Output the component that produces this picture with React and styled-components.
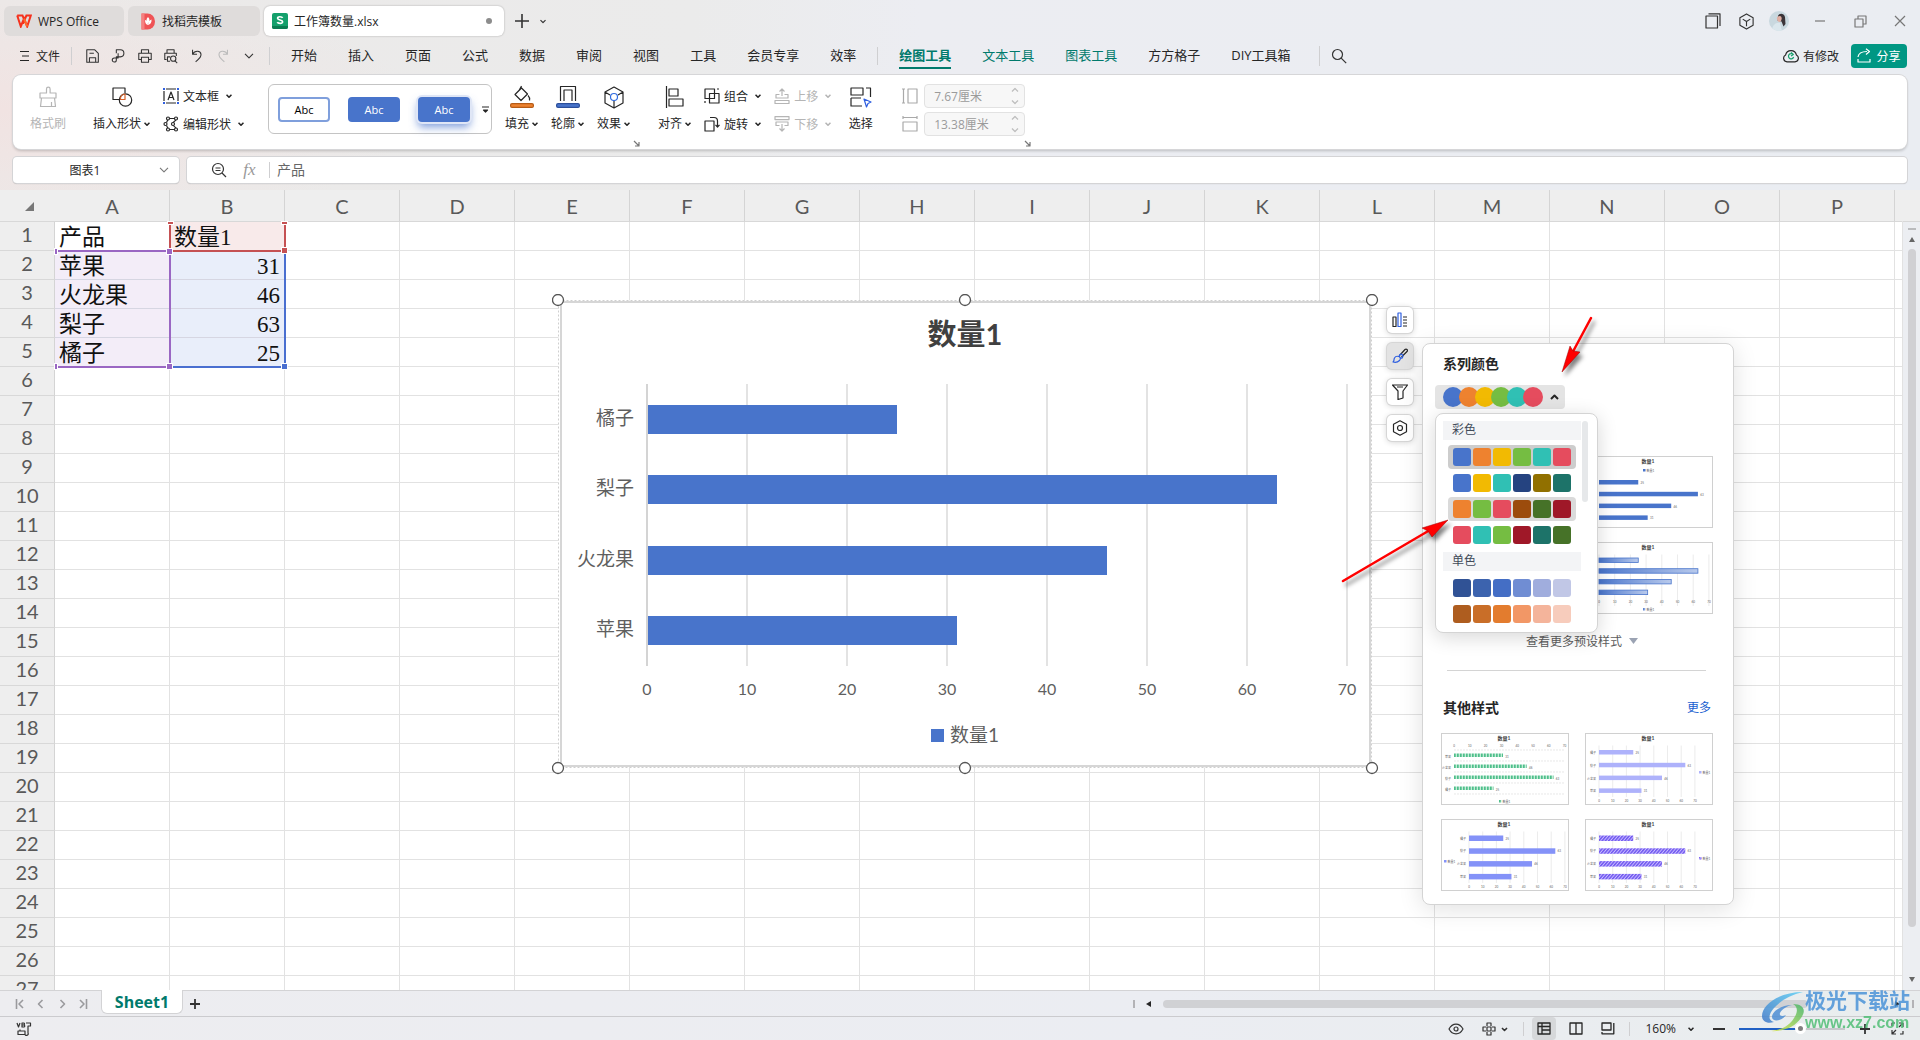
import styled, { createGlobalStyle, css } from 'styled-components';

const GlobalStyle = createGlobalStyle`
  * {
    box-sizing: border-box;
  }

  body {
    margin: 0;
    font-family: 'Open Sans', 'Noto Sans CJK SC', sans-serif;
    font-size: 12px;
    color: #262626;
  }

  button, input {
    font: inherit;
    color: inherit;
    margin: 0;
    padding: 0;
    border: 0;
    background: none;
  }
`;

const Page = styled.div`
  position: relative;
  display: flex;
  flex-direction: column;
  height: 100vh;
  overflow: hidden;
  background:
    radial-gradient(ellipse 420px 130px at 0 110px, #f1e3e2, rgba(241, 227, 226, 0)),
    linear-gradient(90deg, #ebe9e8 0, #ebebeb 36%, #ecedf2 48%, #eaedf2 100%);
`;

/* ---------- title bar ---------- */

const TitleBar = styled.header`
  display: flex;
  align-items: center;
  gap: 4px;
  height: 36px;
  padding: 6px 10px 0 4px;
`;

const DocTab = styled.button`
  display: flex;
  align-items: center;
  gap: 6px;
  width: ${(p) => p.$width}px;
  height: 30px;
  padding: 0 12px 0 ${(p) => (p.$active ? 8 : 12)}px;
  border-radius: 6px;
  background: ${(p) => (p.$active ? '#fff' : '#dfdcdb')};
  box-shadow: ${(p) => (p.$active ? '0 0 2px rgba(0, 0, 0, 0.3)' : 'none')};
`;

const Dot = styled.span`
  width: 6px;
  height: 6px;
  margin-left: auto;
  border-radius: 50%;
  background: #8c8c8c;
`;

const IconButton = styled.button`
  display: flex;
  align-items: center;
  justify-content: center;
  width: ${(p) => p.$width || 20}px;
  height: ${(p) => p.$height || 24}px;
  flex: none;
  color: ${(p) => p.$color || '#333'};
`;

const WindowButtons = styled.div`
  display: flex;
  align-items: center;
  gap: 13px;
  margin-left: auto;
`;

const WindowControls = styled.div`
  display: flex;
  gap: 20px;
  margin-left: 8px;
`;

/* ---------- menu ---------- */

const MenuRow = styled.nav`
  display: flex;
  align-items: center;
  height: 39px;
  padding: 0 13px 0 19px;
`;

const FileButton = styled.button`
  display: flex;
  align-items: center;
  gap: 6px;
  height: 24px;
`;

const Rule = styled.span`
  flex: none;
  width: 1px;
  height: ${(p) => p.$height || 18}px;
  margin: 0 ${(p) => p.$end || p.$gap}px 0 ${(p) => p.$gap}px;
  background: #cfcfd1;
`;

const QuickTools = styled.div`
  display: flex;
  gap: 6px;
`;

const MenuItems = styled.div`
  display: flex;
  gap: 31px;
  font-size: 13px;
`;

const MenuItem = styled.button`
  height: 26px;
  line-height: 22px;
  white-space: nowrap;
  color: ${(p) => (p.$tool ? '#007a6c' : '#262626')};
  border-bottom: 2px solid ${(p) => (p.$active ? '#007a6c' : 'transparent')};
  font-weight: ${(p) => (p.$active ? 700 : 400)};
`;

const MenuEnd = styled.div`
  display: flex;
  align-items: center;
  gap: 12px;
  margin-left: auto;
`;

const Unsaved = styled.button`
  display: flex;
  align-items: center;
  gap: 4px;
`;

const ShareButton = styled.button`
  display: flex;
  align-items: center;
  justify-content: center;
  gap: 5px;
  width: 56px;
  height: 24px;
  border-radius: 4px;
  background: #009783;
  color: #fff;
`;

/* ---------- ribbon ---------- */

const Ribbon = styled.section`
  display: flex;
  flex: none;
  height: 74px;
  margin: 0 13px;
  border-radius: 8px;
  background: #fff;
  box-shadow: 0 0 0 1px #d6d6d8, 0 2px 3px rgba(0, 0, 0, 0.2);
`;

const Group = styled.div`
  position: relative;
  display: flex;
  align-items: flex-start;
  gap: 13px;
  padding: 9px ${(p) => p.$end || 13}px 0 ${(p) => p.$start || 13}px;

  & + &::before {
    content: '';
    position: absolute;
    left: 0;
    top: 4px;
    bottom: 4px;
    width: 1px;
    background: #d5d5d5;
  }
`;

const BigButton = styled.button`
  display: flex;
  flex-direction: column;
  align-items: center;
  min-width: 33px;
  color: ${(p) => (p.disabled ? '#b5b5b5' : '#262626')};
`;

const BigIcon = styled.span`
  display: flex;
  align-items: center;
  height: 26px;
  margin-bottom: 5px;
`;

const Label = styled.span`
  display: flex;
  align-items: center;
  gap: 3px;
  line-height: 18px;
  white-space: nowrap;
`;

const Stack = styled.div`
  display: flex;
  flex-direction: column;
  gap: 4px;
`;

const SmallButton = styled.button`
  display: flex;
  align-items: center;
  gap: 4px;
  height: 24px;
  white-space: nowrap;
  color: ${(p) => (p.disabled ? '#b5b5b5' : '#262626')};

  svg:last-child {
    margin-left: 3px;
  }
`;

const Gallery = styled.div`
  display: flex;
  align-items: center;
  gap: 18px;
  width: 224px;
  height: 50px;
  padding: 0 0 0 9px;
  border: 1px solid #c4c4c4;
  border-radius: 6px;
`;

const GalleryMore = styled.button`
  display: flex;
  flex: none;
  margin-left: -6px;
`;

const Preset = styled.button`
  width: 52px;
  height: 25px;
  flex: none;
  border-radius: 4px;
  font-size: 11px;
  ${(p) =>
    p.$outline
      ? css`
          border: 2px solid #7f9fdc;
          color: #000;
        `
      : css`
          background: #4874cb;
          color: #fff;
        `}
  box-shadow: ${(p) => (p.$raised ? '0 0 0 2px #dfe6f6, 0 5px 8px rgba(72, 116, 203, 0.7)' : 'none')};
`;

const Launcher = styled.button`
  position: absolute;
  right: ${(p) => p.$right || 2}px;
  bottom: 2px;
  display: flex;
`;

const SizeRow = styled.label`
  display: flex;
  align-items: center;
  gap: 6px;
  color: #a9a9a9;
`;

const SizeBox = styled.span`
  display: flex;
  align-items: center;
  width: 101px;
  height: 24px;
  padding: 0 5px 0 9px;
  border: 1px solid #e2e2e2;
  border-radius: 4px;
  background: #f7f7f7;
`;

const SizeInput = styled.input`
  flex: 1;
  min-width: 0;
  color: #9b9b9b;
`;

/* ---------- formula bar ---------- */

const FormulaRow = styled.div`
  display: flex;
  flex: none;
  gap: 8px;
  margin: 8px 13px 7px;
`;

const FormulaBox = styled.div`
  display: flex;
  align-items: center;
  height: 26px;
  padding: 0 4px 0 ${(p) => (p.$grow ? 22 : 4)}px;
  border-radius: 4px;
  background: #fff;
  box-shadow: 0 0 0 1px #d4d4d6, 0 1px 1px rgba(0, 0, 0, 0.25);
  flex: ${(p) => (p.$grow ? 1 : 'none')};
`;

const NameInput = styled.input`
  width: 136px;
  text-align: center;
`;

const FormulaInput = styled.input`
  flex: 1;
  padding-bottom: 2px;
  font-size: 14px;
  color: #666;
`;

const Fx = styled.button`
  width: 35px;
  padding-left: 6px;
  font-family: 'Liberation Serif', serif;
  font-style: italic;
  font-size: 17px;
  color: #999;
`;

/* ---------- sheet ---------- */

const SheetArea = styled.main`
  display: flex;
  flex: 1;
  min-height: 0;
  background: #eee;
`;

const SheetView = styled.div`
  position: relative;
  flex: 1;
  min-width: 0;
  overflow: hidden;
`;

const Table = styled.table`
  width: 100%;
  table-layout: fixed;
  border-collapse: separate;
  border-spacing: 0;
`;

const CornerCell = styled.th`
  width: 55px;
  height: 32px;
  padding: 2px 0 0 3px;
  background: #eee;
  border-bottom: 1px solid #d8d8d8;
  color: #777;
`;

const ColHead = styled.th`
  width: ${(p) => (p.$last ? 'auto' : '115px')};
  padding: 1px 0 0;
  background: #eee;
  border-right: 1px solid ${(p) => (p.$last ? '#eee' : '#d4d4d4')};
  border-bottom: 1px solid #d8d8d8;
  font: 400 20px/30px Lato, sans-serif;
  color: #595959;
`;

const RowHead = styled.th`
  height: 29px;
  padding: 0 0 4px;
  background: #eee;
  border-right: 1px solid #d4d4d4;
  border-bottom: 1px solid #d8d8d8;
  font: 400 20px/24px Lato, sans-serif;
  color: #595959;
`;

const fills = { red: '#f8eaea', purple: '#f3edf8', blue: '#e9eefa' };
const lines = { red: '#c55153', purple: '#9a67c3', blue: '#4a6fd0' };

const Cell = styled.td`
  padding: 4px 4px 0;
  background: ${(p) => fills[p.$fill] || '#fff'};
  border-right: 1px solid #e2e2e2;
  border-bottom: 1px solid ${(p) => (p.$fill ? '#d6d6e2' : '#e2e2e2')};
  font: 400 23px/24px 'Liberation Serif', 'Noto Sans CJK SC', serif;
  text-align: ${(p) => (p.$fill === 'blue' ? 'right' : 'left')};
  white-space: nowrap;
  color: #111;
`;

const RangeBox = styled.div`
  position: absolute;
  left: ${(p) => 54 + p.$col * 115}px;
  top: ${(p) => 31 + p.$row * 29}px;
  width: 117px;
  height: ${(p) => p.$rows * 29 + 2}px;
  border: 2px solid ${(p) => lines[p.$tone]};
  border-top-width: ${(p) => (p.$tone === 'purple' ? 2 : 0)}px;
  border-left-width: ${(p) => (p.$tone === 'red' ? 2 : 0)}px;
`;

const RangeHandle = styled.i`
  position: absolute;
  width: ${(p) => (p.$half ? 4 : 7)}px;
  height: ${(p) => (p.$cut ? 4 : 7)}px;
  border: 1px solid #fff;
  background: ${(p) => lines[p.$tone]};
  ${(p) => (p.$right ? 'right: -4px;' : `left: ${p.$half ? 0 : -4}px;`)}
  ${(p) => (p.$bottom ? 'bottom: -4px;' : `top: ${p.$cut ? 0 : -4}px;`)}
`;

const ScrollStrip = styled.div`
  display: flex;
  flex-direction: column;
  align-items: center;
  width: 17px;
  margin-top: 31px;
  padding: 6px 0 8px;
  gap: 7px;
  border-top: 1px solid #d8d8d8;
  background: #eceef2;
  color: #666;
`;

const ScrollThumb = styled.span`
  flex: 1;
  width: 8px;
  margin-bottom: 43px;
  border-radius: 4px;
  background: #d0d0d3;
`;

/* ---------- floating chart ---------- */

const ChartObject = styled.figure`
  position: absolute;
  left: 552px;
  top: 104px;
  margin: 0;

  svg {
    display: block;
  }
`;

const ChartButtons = styled.div`
  position: absolute;
  left: 1387px;
  top: 117px;
  display: flex;
  flex-direction: column;
  gap: 10px;
`;

const ChartButton = styled.button`
  display: flex;
  align-items: center;
  justify-content: center;
  width: 26px;
  height: 26px;
  border-radius: 5px;
  background: ${(p) => (p.$active ? '#e3e3e3' : '#fff')};
  box-shadow: 0 0 0 1px #d6d6d6, 0 1px 6px rgba(0, 0, 0, 0.2);
`;

/* ---------- style panel ---------- */

const Panel = styled.aside`
  position: absolute;
  left: 1422px;
  top: 153px;
  width: 312px;
  padding: 10px 12px 13px;
  border: 1px solid #d4d4d4;
  border-radius: 8px;
  background: #fff;
  box-shadow: 0 4px 24px rgba(0, 0, 0, 0.12);
`;

const PanelHead = styled.div`
  display: flex;
  justify-content: space-between;
  align-items: center;
  padding: 0 10px 0 8px;
  line-height: 20px;

  a {
    color: #1a5fd0;
    text-decoration: none;
  }
`;

const PanelTitle = styled.h3`
  margin: 0;
  font-size: 14px;
  font-weight: 700;
  line-height: 20px;
`;

const ColorSelect = styled.div`
  position: relative;
  margin: 11px 0 47px;
`;

const ColorButton = styled.button`
  display: flex;
  align-items: center;
  width: 130px;
  height: 24px;
  padding-left: 8px;
  border-radius: 4px;
  background: #e4e4e4;

  svg {
    margin-left: auto;
    margin-right: 6px;
  }
`;

const ColorDot = styled.span`
  width: 20px;
  height: 20px;
  margin-right: -4px;
  border-radius: 50%;
  background: ${(p) => p.$color};
`;

const Dropdown = styled.div`
  position: absolute;
  z-index: 1;
  left: 0;
  top: 28px;
  display: flex;
  gap: 1px;
  width: 163px;
  padding: 7px 3px 4px 7px;
  border: 1px solid #d4d4d4;
  border-radius: 8px;
  background: #fff;
  box-shadow: 0 4px 20px rgba(0, 0, 0, 0.16);
`;

const DropdownBody = styled.div`
  width: 138px;
`;

const DropdownBar = styled.span`
  width: 6px;
  height: 81px;
  border-radius: 3px;
  background: #e6e8ea;
`;

const ColorGroup = styled.div`
  height: 19px;
  margin-bottom: 5px;
  padding-left: 9px;
  background: #f3f4f6;
  line-height: 18px;
  color: #414b59;

  button + & {
    margin-top: 5px;
  }
`;

const SwatchRow = styled.button`
  display: flex;
  align-items: center;
  gap: 2px;
  height: 24px;
  margin: 0 0 2px 5px;
  padding: 0 5px;
  border-radius: 4px;
  background: ${(p) => p.$bg || 'transparent'};
`;

const Swatch = styled.span`
  width: 18px;
  height: 18px;
  border-radius: 3px;
  background: ${(p) => p.$color};
`;

const ThumbGrid = styled.div`
  display: grid;
  grid-template-columns: 128px 128px;
  gap: 14px 16px;
  padding-left: 6px;
`;

const Thumb = styled.button`
  height: 72px;
  border: 1px solid #d0d0d0;
  background: #fff;

  svg {
    display: block;
  }
`;

const MoreButton = styled.button`
  display: flex;
  align-items: center;
  gap: 7px;
  height: 20px;
  margin: 17px auto 0 91px;
  color: #5c5c5c;
`;

const PanelRule = styled.hr`
  height: 1px;
  margin: 19px 15px 27px 12px;
  border: 0;
  background: #d4d4d4;
`;

const Spacer = styled.div`
  height: 15px;
`;

/* ---------- footer ---------- */

const Footer = styled.footer`
  position: relative;
  flex: none;
  background: linear-gradient(90deg, #ededf0, #ebedf2 60%, #e9edee);
`;

const SheetBar = styled.div`
  display: flex;
  align-items: center;
  height: 27px;
  padding-left: 10px;
  padding-right: 6px;
  border-top: 1px solid #d3d3d5;
  border-bottom: 1px solid #cbcbce;
`;

const SheetNav = styled.div`
  display: flex;
  gap: 1px;
  margin-right: 8px;
`;

const SheetTab = styled.button`
  align-self: flex-start;
  width: 82px;
  height: 24px;
  margin-top: -1px;
  border: 1px solid #d3d3d5;
  border-top: 0;
  border-radius: 0 0 6px 6px;
  background: #fff;
  color: #007a6c;
  font-size: 16px;
  font-weight: 700;
  line-height: 22px;
`;

const HScroll = styled.div`
  display: flex;
  align-items: center;
  gap: 11px;
  width: 41%;
  margin-left: auto;
`;

const HThumb = styled.span`
  flex: 1;
  height: 8px;
  margin-right: 76px;
  border-radius: 4px;
  background: #d0d1d4;
`;

const Grip = styled.span`
  width: 2px;
  height: 8px;
  background: #b3b3b6;
`;

const StatusBar = styled.div`
  display: flex;
  align-items: center;
  height: 23px;
  padding: 0 15px 0 14px;
`;

const StatusEnd = styled.div`
  display: flex;
  align-items: center;
  margin-left: auto;
`;

const ReadTools = styled.div`
  display: flex;
  gap: 18px;
`;

const ViewButton = styled.button`
  display: flex;
  align-items: center;
  justify-content: center;
  width: 24px;
  height: 23px;
  margin-right: 8px;
  border-radius: 4px;
  background: ${(p) => (p.$active ? '#d6d8da' : 'transparent')};
`;

const ZoomText = styled.button`
  display: flex;
  align-items: center;
  gap: 12px;
  margin-right: 17px;
`;

const ZoomSlider = styled.input`
  appearance: none;
  width: 106px;
  height: 2px;
  margin: 0 12px;
  background: linear-gradient(90deg, #2060c4 58%, #c6c8cb 58%);

  &::-webkit-slider-thumb {
    appearance: none;
    width: 11px;
    height: 11px;
    border: 3px solid #fff;
    border-radius: 50%;
    background: #808080;
  }
`;

const FullScreen = styled(IconButton)`
  margin-left: 16px;
`;

const Watermark = styled.div`
  position: absolute;
  right: 10px;
  bottom: 6px;
  display: flex;
  align-items: center;
  gap: 1px;
  opacity: 0.85;
  pointer-events: none;
`;

const WatermarkText = styled.div`
  display: flex;
  flex-direction: column;
  font-family: 'Liberation Sans', 'Noto Sans CJK SC', sans-serif;

  strong {
    font-size: 21px;
    line-height: 23px;
    color: #4b93d8;
  }

  span {
    font-size: 16px;
    line-height: 22px;
    font-weight: 700;
    color: #52bf77;
  }
`;

const Arrows = styled.svg`
  position: absolute;
  z-index: 2;
  left: 1330px;
  top: 300px;
  pointer-events: none;
  filter: drop-shadow(3px 4px 2px rgba(0, 0, 0, 0.5));
`;

/* ---------- icons ---------- */

const Svg = ({ w = 18, h = w, vb, children, stroke = 'currentColor', sw = 1.2 }) => (
  <svg
    width={w}
    height={h}
    viewBox={vb || `0 0 ${w} ${h}`}
    fill="none"
    stroke={stroke}
    strokeWidth={sw}
    strokeLinejoin="round"
    aria-hidden="true"
  >
    {children}
  </svg>
);

const Chevron = ({ w = 6, sw = 1.6 }) => (
  <Svg w={w} h={w} vb="0 0 6 6" sw={sw}>
    <path d="M.5 1.7 3 4.2 5.5 1.7" />
  </Svg>
);

const WideChevron = () => (
  <Svg w={10} h={6} sw={1.1}>
    <path d="M1 .8 5 4.8 9 .8" />
  </Svg>
);

const Triangle = ({ d, w = 7, h = 6 }) => (
  <Svg w={w} h={h} stroke="none">
    <path d={d} fill="currentColor" />
  </Svg>
);

const WpsLogo = () => (
  <svg width="16" height="14" viewBox="0 0 16 14" fill="none" aria-hidden="true">
    <path d="M1.2 1.5h5.3L8 5.3M1.2 1.5l3.6 11L8 4.7l3.2 7.8 3.6-11h-4.4L7 9.5" stroke="#f5311d" strokeWidth="2" />
    <path d="M8 4.7l3.2 7.8" stroke="#ff6a2b" strokeWidth="2" />
  </svg>
);

const DocerLogo = () => (
  <svg width="16" height="17" viewBox="0 0 15 17" aria-hidden="true">
    <path d="M1 .5h6a7.500 8 0 0 1 0 16H1z" fill="#ef5355" />
    <path d="M1 .5h3v16H1z" fill="#f58080" />
    <path d="M7.500 4c2 2 2 4 0 6-2-2-2-4 0-6zM4.500 7c2 .5 3 2 3 5-2-.6-3-2-3-5zM11 6.500c.3 3-1 5-3.500 5.500 0-3 1.500-4.500 3.500-5.500z" fill="#fff" />
  </svg>
);

const SheetLogo = () => (
  <svg width="16" height="16" viewBox="0 0 16 16" aria-hidden="true">
    <rect width="16" height="16" rx="2" fill="#14a06c" />
    <path d="M0 13h16v1a2 2 0 0 1-2 2H2a2 2 0 0 1-2-2z" fill="#0b7c52" />
    <path d="M10.600 4.800C10 3.600 5.700 3 5.600 5.300c0 2.200 5 1.200 5 3.500C10.500 11.200 6 10.700 5.300 9.200" fill="none" stroke="#fff" strokeWidth="1.700" />
  </svg>
);

const Avatar = () => (
  <svg width="20" height="20" viewBox="0 0 20 20" aria-hidden="true">
    <clipPath id="face">
      <circle cx="10" cy="10" r="10" />
    </clipPath>
    <g clipPath="url(#face)">
      <rect width="20" height="20" fill="#c9d8df" />
      <path d="M9 5c1-3 6-3 7 1l.5 7-2 2.500-2-5-4-1z" fill="#3b3438" />
      <path d="M8 6.500c1.500-2 4-2 4.500 0s-.5 4-2 4.500S7.500 8.500 8 6.500z" fill="#e0b0a4" />
      <path d="M3 20c0-6 4-9 8-8l2 8z" fill="#dbe7ed" />
    </g>
  </svg>
);

const quickIcons = [
  ['保存', <path key="a" d="M2 2h9l4 4v10H2zM5 16v-5h7v5M5 6h5" />],
  ['输出', <path key="a" d="M6 6V2h4.500a4 4 0 0 1 0 8H6v3.500a2.300 2.300 0 1 1-2.300-2.300H8V6" />],
  ['打印', <path key="a" d="M5 6V2h8v4M4.500 13H2V6h14v7h-2.500M5 10.500h8V16H5z" />],
  ['预览', <g key="a"><path d="M4.500 6V2h8v4M4 13H2V6h13v3M8 15H5v-5h3" /><circle cx="11.500" cy="12" r="3" /><path d="m13.500 14.500 2.500 2.500" /></g>],
  ['撤销', <path key="a" d="M4 2v5h5M4.300 6.700C6 3 13 2 13.500 7c.3 4-3.500 6-6 8.500" />],
];

const Cube = ({ w = 18 }) => (
  <Svg w={w} vb="0 0 18 18">
    <path d="M9 1 16 5v8l-7 4-7-4V5zM5 6.500 9 9l4-2.500M9 9v5" />
  </Svg>
);

/* ---------- data ---------- */

const columns = 'ABCDEFGHIJKLMNOP'.split('');
const rows = [
  ['产品', '数量1'],
  ['苹果', 31],
  ['火龙果', 46],
  ['梨子', 63],
  ['橘子', 25],
];
const series = rows.slice(1).map(([name, value]) => ({ name, value })).reverse();

const menus = ['开始', '插入', '页面', '公式', '数据', '审阅', '视图', '工具', '会员专享', '效率'];
const toolMenus = ['绘图工具', '文本工具', '图表工具'];
const extraMenus = ['方方格子', 'DIY工具箱'];

const mainColors = ['#4874cb', '#ee822f', '#f2ba02', '#75bd42', '#30c0b4', '#e54c5e'];
const colorful = [
  mainColors,
  ['#4874cb', '#f2ba02', '#30c0b4', '#254380', '#917000', '#1d7369'],
  ['#ee822f', '#75bd42', '#e54c5e', '#9c4c0c', '#467228', '#9f1828'],
  ['#e54c5e', '#30c0b4', '#75bd42', '#9f1828', '#1d7369', '#467228'],
];
const single = [
  ['#305295', '#3c63ae', '#446ec5', '#708dd3', '#a0addd', '#c1c7e6'],
  ['#ae5d1f', '#c96e28', '#e37c2e', '#f29766', '#f4b49b', '#f7ccbc'],
];

const cellFill = (r, c) => {
  if (r === 0) return c === 1 ? 'red' : undefined;
  if (r > 4) return undefined;
  return ['purple', 'blue'][c];
};

/* ---------- charts ---------- */

const ChartText = styled.text`
  font-family: Lato, 'Noto Sans CJK SC', sans-serif;
  font-size: ${(p) => p.$size}px;
  font-weight: ${(p) => (p.$bold ? 700 : 400)};
  fill: ${(p) => (p.$bold ? '#404040' : '#5f5f5f')};
  stroke: none;
  text-anchor: ${(p) => p.$anchor || 'middle'};
`;

function BarChart() {
  const ticks = [0, 10, 20, 30, 40, 50, 60, 70];
  return (
    <svg width="828" height="482" viewBox="0 0 828 482" role="img" aria-label="数量1">
      <rect x="6.500" y="6.500" width="813" height="467" fill="#fff" stroke="#cfcfcf" strokeDasharray="2 2" />
      <rect x="9" y="8" width="809" height="464" fill="#fff" stroke="#d6d6d6" strokeWidth="2" />
      <ChartText x="413" y="51" $size={29} $bold>数量1</ChartText>
      {ticks.map((t) => (
        <g key={t}>
          <rect x={94 + t * 10} y="90" width="2" height="282" fill={t ? '#e3e3e3' : '#d4d4d4'} />
          <ChartText x={95 + t * 10} y="401" $size={16}>{t}</ChartText>
        </g>
      ))}
      {series.map((s, i) => (
        <g key={s.name}>
          <rect x="96" y={111 + Math.round(i * 70.4)} width={s.value * 10 - 1} height="29" fill="#4874cb" />
          <ChartText x="82" y={131 + Math.round(i * 70.4)} $size={19} $anchor="end">{s.name}</ChartText>
        </g>
      ))}
      <rect x="379" y="435" width="13" height="13" fill="#4874cb" />
      <ChartText x="398" y="448" $size={19} $anchor="start">数量1</ChartText>
      {[6, 413, 820].map((x) =>
        [6, 474].map((y) => <circle key={`${x}-${y}`} cx={x} cy={y} r="5.500" fill="#fff" stroke="#555" strokeWidth="1.300" />)
      )}
    </svg>
  );
}

function MiniChart({ fill, left = 13, unit = 1.37, top = 15, step = 12.8, bar = 4.5, grid = true, axis = 66, axisTop, legend, flip, edge, names = true }) {
  const data = flip ? [...series].reverse() : series;
  const ticks = [0, 10, 20, 30, 40, 50, 60, 70];
  return (
    <svg width="126" height="70" viewBox="0 0 126 70" aria-hidden="true">
      <defs>
        <linearGradient id="fade">
          <stop offset="0" stopColor="#4874cb" />
          <stop offset="1" stopColor="#b9caec" />
        </linearGradient>
        <pattern id="dash" width="3" height="4" patternUnits="userSpaceOnUse">
          <rect width="3" height="4" fill="#c4ecd8" />
          <rect width="1.700" height="4" fill="#4fbf8b" />
        </pattern>
        <pattern id="hatch" width="2.500" height="2.500" patternUnits="userSpaceOnUse" patternTransform="rotate(40)">
          <rect width="2.500" height="2.500" fill="#c9bcff" />
          <rect width="1.500" height="2.500" fill="#6f57f0" />
        </pattern>
      </defs>
      <ChartText x="62" y="6" $size={5} $bold>数量1</ChartText>
      {grid && ticks.map((t) => <path key={t} d={`M${left + t * unit} 11.500V63`} stroke="#e4e4e4" strokeWidth=".7" />)}
      {axisTop && [16, 27, 38, 49, 60].map((y) => <path key={y} d={`M${left} ${y}H122`} stroke="#d8d8d8" strokeWidth=".6" strokeDasharray="2 1" />)}
      {axis > 0 && ticks.map((t) => <ChartText key={t} x={left + t * unit} y={axis + 2} $size={3}>{t}</ChartText>)}
      {data.map((s, i) => (
        <g key={s.name}>
          {names && <ChartText x={left - 3} y={top + i * step + 4} $size={3} $anchor="end">{s.name}</ChartText>}
          <rect x={left} y={top + i * step} width={s.value * unit} height={bar} fill={fill} stroke={edge} strokeWidth=".8" />
          {!edge && <ChartText x={left + s.value * unit + 4} y={top + i * step + 4} $size={3}>{s.value}</ChartText>}
        </g>
      ))}
      <rect x={legend[0]} y={legend[1]} width="2.500" height="2.500" fill={fill} />
      <ChartText x={legend[0] + 3.5} y={legend[1] + 2.5} $size={3} $anchor="start">数量1</ChartText>
    </svg>
  );
}

const presetPlain = { fill: '#4874cb', unit: 1.57, top: 23, step: 11.8, axis: 0, grid: false, legend: [57, 12] };
const presetFade = { fill: 'url(#fade)', edge: '#4874cb', unit: 1.57, top: 15, step: 10.7, axis: 58, legend: [57, 65] };
const presetCharts = [presetPlain, presetPlain, presetFade, presetFade];

const otherCharts = [
  { fill: 'url(#dash)', unit: 1.58, left: 12, top: 19.5, step: 11, bar: 3.5, grid: false, axis: 11, axisTop: true, flip: true, legend: [57, 66] },
  { fill: '#aeb2fb', top: 16, legend: [113, 37] },
  { fill: '#8492f8', left: 27, top: 15.5, bar: 5.5, legend: [2, 40] },
  { fill: 'url(#hatch)', top: 15.5, bar: 5.5, legend: [113, 37] },
];

/* ---------- parts ---------- */

function Big({ icon, label, menu, disabled }) {
  return (
    <BigButton disabled={disabled}>
      <BigIcon>{icon}</BigIcon>
      <Label>
        {label}
        {menu && <Chevron />}
      </Label>
    </BigButton>
  );
}

function Small({ icon, label, disabled }) {
  return (
    <SmallButton disabled={disabled}>
      {icon}
      {label}
      <Chevron />
    </SmallButton>
  );
}

function SizeField({ id, label, value, icon }) {
  return (
    <SizeRow htmlFor={id}>
      {icon}
      <SizeBox>
        <SizeInput id={id} aria-label={label} defaultValue={value} disabled />
        <Svg w={8} h={18} stroke="#bdbdbd">
          <path d="M1 4.500 4 1.500l3 3M1 13.500l3 3 3-3" />
        </Svg>
      </SizeBox>
    </SizeRow>
  );
}

const LaunchIcon = () => (
  <Svg w={7} h={7} stroke="#777">
    <path d="M1 1l5 5M6 2v4H2" />
  </Svg>
);

function TopBars() {
  return (
    <>
      <TitleBar>
        <DocTab $width={120}><WpsLogo />WPS Office</DocTab>
        <DocTab $width={132}><DocerLogo />找稻壳模板</DocTab>
        <DocTab $width={240} $active><SheetLogo />工作簿数量.xlsx<Dot /></DocTab>
        <IconButton aria-label="新建" $width={28}>
          <Svg w={14} sw={1.6}><path d="M7 0v14M0 7h14" /></Svg>
        </IconButton>
        <IconButton aria-label="更多标签" $width={6}><Chevron w={7} sw={1.2} /></IconButton>
        <WindowButtons>
          <IconButton aria-label="窗口">
            <Svg w={16}><path d="M1 3h11.500v12H1zM3.500.8H15V13" /></Svg>
          </IconButton>
          <IconButton aria-label="应用"><Cube w={17} /></IconButton>
          <IconButton aria-label="账号"><Avatar /></IconButton>
          <WindowControls>
            <IconButton aria-label="最小化" $color="#777"><Svg w={10}><path d="M0 5h10" /></Svg></IconButton>
            <IconButton aria-label="还原" $color="#777"><Svg w={13}><path d="M1 4h8v8H1zM4 4V1h8v8H9" /></Svg></IconButton>
            <IconButton aria-label="关闭" $color="#777"><Svg w={12}><path d="m1 1 10 10M11 1 1 11" /></Svg></IconButton>
          </WindowControls>
        </WindowButtons>
      </TitleBar>

      <MenuRow>
        <FileButton>
          <Svg w={11} h={12}><path d="M1 1.500h9M3 6h7M1 10.500h9" /></Svg>
          文件
        </FileButton>
        <Rule $gap={11} />
        <QuickTools>
          {quickIcons.map(([name, art]) => (
            <IconButton key={name} aria-label={name}><Svg w={16} vb="0 0 18 18">{art}</Svg></IconButton>
          ))}
          <IconButton aria-label="恢复" $color="#bbb">
            <Svg w={16} vb="0 0 18 18"><path d="M14 2v5H9M13.700 6.700C12 3 5 2 4.500 7c-.3 4 3.500 6 6 8.500" /></Svg>
          </IconButton>
          <IconButton aria-label="更多"><WideChevron /></IconButton>
        </QuickTools>
        <Rule $gap={10} $end={21} />
        <MenuItems>
          {menus.map((m) => <MenuItem key={m}>{m}</MenuItem>)}
        </MenuItems>
        <Rule $gap={21} />
        <MenuItems>
          {toolMenus.map((m, i) => <MenuItem key={m} $tool $active={i === 0}>{m}</MenuItem>)}
          {extraMenus.map((m) => <MenuItem key={m}>{m}</MenuItem>)}
        </MenuItems>
        <Rule $gap={28} $end={11} $height={20} />
        <IconButton aria-label="搜索" $width={16}>
          <Svg w={16} vb="0 0 16 16"><circle cx="6.500" cy="6.500" r="5" /><path d="m10.200 10.200 5 5" /></Svg>
        </IconButton>
        <MenuEnd>
          <Unsaved>
            <Svg w={16} h={14}>
              <path d="M4 12.800A3.600 3.600 0 0 1 2.600 6a5.500 5.500 0 0 1 10.800 0A3.600 3.600 0 0 1 12 12.800z" />
              <path d="M10 5.500A2.600 2.600 0 1 0 10.600 8M8 3.500l2.300 2-2.300 1.500" stroke="#17a06d" />
            </Svg>
            有修改
          </Unsaved>
          <ShareButton>
            <Svg w={14} h={15}><path d="M1 9c.5-4 4-5.500 9-5.500M9 .8l3.500 2.700L9 6.500M1 11v3h12v-3" /></Svg>
            分享
          </ShareButton>
        </MenuEnd>
      </MenuRow>
    </>
  );
}

function Tools() {
  return (
    <Ribbon>
      <Group $start={17} $end={14}>
        <Big
          disabled
          label="格式刷"
          icon={<Svg w={20} h={22}><path d="M8.500 7V3a1.800 1.800 0 0 1 3.600 0v4H18v5H2V7zM3.500 12 2.500 20.500h15L16.500 12M13.500 20v-4" /></Svg>}
        />
      </Group>
      <Group $end={15}>
        <Big
          menu
          label="插入形状"
          icon={
            <Svg w={22}>
              <path d="M9 13.500H2V2h12v5" />
              <circle cx="14.500" cy="14" r="6.200" />
              <path d="M9.500 13.500V12a5 5 0 0 1 4.500-4v5.500z" stroke="#d8622a" />
            </Svg>
          }
        />
        <Stack>
          <Small
            label="文本框"
            icon={
              <Svg w={16}>
                <path d="M1 3v10M15 3v10M3 1h10M3 15h10M5 12l3-8 3 8M6 9.500h4" />
                <path d="M0 1h2M14 1h2M0 15h2M14 15h2" stroke="#2f5fe0" strokeWidth="2" />
              </Svg>
            }
          />
          <Small
            label="编辑形状"
            icon={
              <Svg w={16}>
                <path d="M5 2.500h7M3.500 6.500 5 3.500M3.500 9.500 5 12.500M5 13.500h7M13 4c-4 2.500-4 5.500 0 8" />
                <circle cx="5" cy="2.500" r="1.500" fill="#fff" /><circle cx="13" cy="2.500" r="1.500" fill="#fff" />
                <circle cx="2.500" cy="8" r="1.500" fill="#fff" /><circle cx="5" cy="13.500" r="1.500" fill="#fff" />
                <circle cx="13" cy="13.500" r="1.500" fill="#fff" /><circle cx="10" cy="8" r="1.500" fill="#fff" />
              </Svg>
            }
          />
        </Stack>
      </Group>
      <Group $start={9} $end={14}>
        <Gallery>
          <Preset $outline>Abc</Preset>
          <Preset>Abc</Preset>
          <Preset $raised>Abc</Preset>
          <GalleryMore aria-label="更多样式"><Svg w={7} h={7}><path d="M0 1h7M1.500 4l2 2 2-2z" fill="currentColor" /></Svg></GalleryMore>
        </Gallery>
        <Big
          menu
          label="填充"
          icon={
            <Svg w={24}>
              <path d="M5 9.500 11.500 3l6 6-6.500 6.500zM9 5.500 11.500 1M18 10.500c1.500 1.500 2 3 1.500 5" />
              <rect x=".6" y="18.600" width="22.800" height="3.800" rx="1.500" fill="#ee822f" stroke="#b55b17" />
            </Svg>
          }
        />
        <Big
          menu
          label="轮廓"
          icon={
            <Svg w={24}>
              <path d="M4.500 16V1.500h15V16M8 16V5h8v11" />
              <rect x=".6" y="18.600" width="22.800" height="3.800" rx="1.500" fill="#4874cb" stroke="#2c4f9b" />
            </Svg>
          }
        />
        <Big
          menu
          label="效果"
          icon={
            <Svg w={22} h={23}>
              <path d="m11 1 9 5v11l-9 5-9-5V6zM2 6l5 3M20 6l-5 3M11 15v7" />
              <circle cx="11" cy="11" r="3.500" stroke="#2f6be0" />
            </Svg>
          }
        />
        <Launcher aria-label="形状格式" $right={4}><LaunchIcon /></Launcher>
      </Group>
      <Group $start={14} $end={16}>
        <Big menu label="对齐" icon={<Svg w={20} h={22}><path d="M1.500 0v22M4 3h9v7H4zM4 13h14v7H4z" /></Svg>} />
        <Stack>
          <Small label="组合" icon={<Svg w={16}><path d="M1 1h9.500v9.500H1zM5.500 5.500H15V15H5.500zM13 1h2M1 13v2" /></Svg>} />
          <Small label="旋转" icon={<Svg w={16}><path d="M1 5h9v10H1zM6 1.500h4a3.500 3.500 0 0 1 3.500 3.500v6M11.500 8.800l2 2.200 2-2.200" /></Svg>} />
        </Stack>
        <Stack>
          <Small disabled label="上移" icon={<Svg w={16}><path d="M8 8V1M5.500 3.500 8 1l2.500 2.500M5.500 6.500H2V10h12V6.500h-3.500M1 12.500h14v3H1z" /></Svg>} />
          <Small disabled label="下移" icon={<Svg w={16}><path d="M8 8v7M5.500 12.500 8 15l2.500-2.500M5.500 9.500H2V6h12v3.500h-3.500M1 .6h14v3H1z" /></Svg>} />
        </Stack>
        <Big
          label="选择"
          icon={
            <Svg w={22}>
              <path d="M1 9V2h12v7zM16 2h4.500v9M1 12v8h11M1 12h10" />
              <path d="m14 13 7 3-3 1.500-1.500 3.500z" stroke="#2f5fe0" />
            </Svg>
          }
        />
      </Group>
      <Group $start={9} $end={10}>
        <Stack>
          <SizeField id="shape-h" label="高度" value="7.67厘米" icon={<Svg w={16}><path d="M1.500 1v14M0 1h3M0 15h3M6 1h9v14H6z" /></Svg>} />
          <SizeField id="shape-w" label="宽度" value="13.38厘米" icon={<Svg w={16}><path d="M1 1.500h14M1 0v3M15 0v3M1 6h14v9H1z" /></Svg>} />
        </Stack>
        <Launcher aria-label="大小" $right={4}><LaunchIcon /></Launcher>
      </Group>
    </Ribbon>
  );
}

function Grid() {
  return (
    <Table>
      <thead>
        <tr>
          <CornerCell scope="col" aria-label="全选"><Triangle w={9} h={9} d="M9 0v9H0z" /></CornerCell>
          {columns.map((c) => <ColHead key={c} scope="col">{c}</ColHead>)}
          <ColHead $last aria-hidden="true" />
        </tr>
      </thead>
      <tbody>
        {Array.from({ length: 27 }, (_, r) => (
          <tr key={r}>
            <RowHead scope="row">{r + 1}</RowHead>
            {columns.map((c, i) => (
              <Cell key={c} $fill={cellFill(r, i)}>{rows[r] && rows[r][i]}</Cell>
            ))}
            <Cell />
          </tr>
        ))}
      </tbody>
    </Table>
  );
}

function StylePanel() {
  return (
    <Panel>
      <PanelHead><PanelTitle>系列颜色</PanelTitle></PanelHead>
      <ColorSelect>
        <ColorButton aria-label="系列颜色" aria-expanded="true">
          {mainColors.map((c) => <ColorDot key={c} $color={c} />)}
          <Svg w={9} h={6} sw={2}><path d="M1 5 4.500 1.500 8 5" /></Svg>
        </ColorButton>
        <Dropdown>
          <DropdownBody>
            <ColorGroup>彩色</ColorGroup>
            {colorful.map((row, i) => (
              <SwatchRow key={row.join()} aria-label={`彩色 ${i + 1}`} $bg={['#cdcdcd', '', '#dadada'][i]}>
                {row.map((c) => <Swatch key={c} $color={c} />)}
              </SwatchRow>
            ))}
            <ColorGroup>单色</ColorGroup>
            {single.map((row, i) => (
              <SwatchRow key={row.join()} aria-label={`单色 ${i + 1}`}>
                {row.map((c) => <Swatch key={c} $color={c} />)}
              </SwatchRow>
            ))}
          </DropdownBody>
          <DropdownBar />
        </Dropdown>
      </ColorSelect>
      <ThumbGrid>
        {presetCharts.map((c, i) => <Thumb key={i} aria-label={`预设样式 ${i + 1}`}><MiniChart {...c} names={false} /></Thumb>)}
      </ThumbGrid>
      <MoreButton>
        查看更多预设样式
        <Svg w={9} h={7} stroke="none"><path d="M0 0h9L4.500 6z" fill="#9ba3b3" /></Svg>
      </MoreButton>
      <PanelRule />
      <PanelHead><PanelTitle>其他样式</PanelTitle><a href="#more">更多</a></PanelHead>
      <Spacer />
      <ThumbGrid>
        {otherCharts.map((c, i) => <Thumb key={i} aria-label={`其他样式 ${i + 1}`}><MiniChart {...c} /></Thumb>)}
      </ThumbGrid>
    </Panel>
  );
}

function Bottom() {
  return (
    <Footer>
      <SheetBar>
        <SheetNav>
          {['M1.500 1v10M8 2 4 6l4 4', 'M6.500 2l-4 4 4 4', 'M3.500 2l4 4-4 4', 'M2 2l4 4-4 4M8.500 1v10'].map((d) => (
            <IconButton key={d} aria-label="切换工作表" $color="#9a9a9d"><Svg w={10} h={12} sw={1.6}><path d={d} /></Svg></IconButton>
          ))}
        </SheetNav>
        <SheetTab>Sheet1</SheetTab>
        <IconButton aria-label="新建工作表" $width={24}><Svg w={10} sw={1.8}><path d="M5 0v10M0 5h10" /></Svg></IconButton>
        <HScroll>
          <Grip />
          <Triangle w={6} h={6} d="M5 0v6L0 3z" />
          <HThumb />
          <Triangle w={6} h={6} d="M0 0v6l5-3z" />
          <Grip />
        </HScroll>
      </SheetBar>
      <StatusBar>
        <IconButton aria-label="宏" $height={22}>
          <Svg w={16} h={14}>
            <path d="M1 1l1.500 4L4 1M6 1v4h1.800a1 1 0 0 0 0-2H6h1.500a1 1 0 0 0 0-2zM10 1h4.500v3H12v7a1.500 1.500 0 0 1-3 1.500H2V9h7v3.500M4 9V7.500" />
          </Svg>
        </IconButton>
        <StatusEnd>
          <ReadTools>
            <IconButton aria-label="护眼" $height={22} $width={16}>
              <Svg w={16} h={12}><path d="M1 6c3.500-6.500 10.500-6.500 14 0-3.500 6.500-10.500 6.500-14 0z" /><circle cx="8" cy="6" r="2" /></Svg>
            </IconButton>
            <IconButton aria-label="阅读模式" $height={22} $width={26}>
              <Svg w={26} h={14}>
                <path d="M5 4V1h4v3M5 10v3h4v-3M4 5H1v4h3M10 5h3v4h-3M5 5h4v4H5z" />
                <path d="M20 6l2.500 2.500L25 6" strokeWidth="1.600" />
              </Svg>
            </IconButton>
          </ReadTools>
          <Rule $height={14} $gap={15} $end={8} />
          <ViewButton $active aria-label="普通视图"><Svg w={14} h={13} sw={1.3}><path d="M1 1h12v11H1zM1 4.500h12M5 1v11M5 8h8" /></Svg></ViewButton>
          <ViewButton aria-label="分页预览"><Svg w={14} h={13} sw={1.3}><path d="M1 1h12v11H1zM7 1v11" /></Svg></ViewButton>
          <ViewButton aria-label="页面布局"><Svg w={14} h={13} sw={1.3}><path d="M1 1h9v7H1zM12.800 1v10.800H1V10" /></Svg></ViewButton>
          <Rule $height={14} $gap={1} $end={15} />
          <ZoomText>160%<Chevron /></ZoomText>
          <IconButton aria-label="缩小" $width={16} $height={22}><Svg w={12} sw={2}><path d="M0 6h12" /></Svg></IconButton>
          <ZoomSlider type="range" aria-label="缩放" min="0" max="100" defaultValue="59" />
          <IconButton aria-label="放大" $width={16} $height={22}><Svg w={10} sw={1.8}><path d="M5 0v10M0 5h10" /></Svg></IconButton>
          <FullScreen aria-label="全屏" $height={22} $width={16}><Svg w={13}><path d="M8 1h4v4M12 1 8 5M5 12H1V8M1 12l4-4M1 4V1h3M12 9v3H9" /></Svg></FullScreen>
        </StatusEnd>
      </StatusBar>
      <Watermark>
        <svg width="44" height="40" viewBox="0 0 44 40" aria-hidden="true">
          <defs>
            <linearGradient id="wm" x1="0" y1="1" x2="1" y2="0">
              <stop offset="0" stopColor="#3f78c8" />
              <stop offset="1" stopColor="#5fd0f5" />
            </linearGradient>
            <linearGradient id="wm2" x1="0" y1="1" x2="1" y2="0">
              <stop offset="0" stopColor="#dbe64a" />
              <stop offset="1" stopColor="#45b56c" />
            </linearGradient>
          </defs>
          <path d="M43 0C20 0 2 12 2 24c0 6 6 8 12 6-6-2-6-7 0-14C21 8 31 3 43 0z" fill="url(#wm)" />
          <path d="M33 12c10 0 14 6 8 14-6 9-18 14-31 13 12-1 20-6 24-13 4-6 4-11-1-14z" fill="url(#wm2)" />
          <path d="M32 13c-10 0-20 6-20 12 0 5 9 5 14-2-4 2-7 1-6-2 2-4 7-7 12-8z" fill="#4f8fd4" />
        </svg>
        <WatermarkText>
          <strong>极光下载站</strong>
          <span>www.xz7.com</span>
        </WatermarkText>
      </Watermark>
    </Footer>
  );
}

function App() {
  return (
    <Page>
      <GlobalStyle />
      <TopBars />
      <Tools />
      <FormulaRow>
        <FormulaBox>
          <NameInput aria-label="名称框" defaultValue="图表1" />
          <IconButton aria-label="展开名称" $width={22} $color="#777"><WideChevron /></IconButton>
        </FormulaBox>
        <FormulaBox $grow>
          <IconButton aria-label="查看">
            <Svg w={16}><circle cx="7" cy="7" r="5.500" /><path d="m11 11 4 4M4.500 6h5M4.500 8.500h5" /></Svg>
          </IconButton>
          <Fx aria-label="插入函数">fx</Fx>
          <Rule $gap={5} $end={7} $height={16} />
          <FormulaInput aria-label="编辑栏" defaultValue="产品" />
        </FormulaBox>
      </FormulaRow>
      <SheetArea>
        <SheetView>
          <Grid />
          <RangeBox $tone="blue" $col={1} $row={1} $rows={4}><RangeHandle $tone="blue" $right $bottom /></RangeBox>
          <RangeBox $tone="red" $col={1} $row={0} $rows={1}>
            <RangeHandle $tone="red" $cut />
            <RangeHandle $tone="red" $cut $right />
            <RangeHandle $tone="red" $right $bottom />
          </RangeBox>
          <RangeBox $tone="purple" $col={0} $row={1} $rows={4}>
            <RangeHandle $tone="purple" $half />
            <RangeHandle $tone="purple" $right />
            <RangeHandle $tone="purple" $half $bottom />
            <RangeHandle $tone="purple" $right $bottom />
          </RangeBox>
          <ChartObject><BarChart /></ChartObject>
          <ChartButtons>
            <ChartButton aria-label="图表元素">
              <Svg w={16}><path d="M1 5h3v9.500H1zM11 5h4M11 8h4M11 11h4M11 14h4" /><path d="M6 1h3v13.500H6z" stroke="#2f5fe0" /></Svg>
            </ChartButton>
            <ChartButton $active aria-label="图表样式">
              <Svg w={16}><path d="m8 7 5-5.500a1.400 1.400 0 0 1 2 2L9.500 9" /><path d="M8 6.500a2 2 0 0 1 2.500 3c-1 1-2 .5-2.500 0s-1-2 0-3zM6.500 8.500c2 .2 2.500 2.500 1 4C6 14 3 14.500 1 14c1.500-1 .5-2 1.500-4 .8-1.400 2.500-2 4-1.500z" stroke="#2f5fe0" /></Svg>
            </ChartButton>
            <ChartButton aria-label="图表筛选">
              <Svg w={16}><path d="M.5 1h15L11 7v7l-5 1.500V7zM5 3h6" /></Svg>
            </ChartButton>
            <ChartButton aria-label="设置">
              <Svg w={16}><path d="m8 .8 6.500 3.500v7.400L8 15.200l-6.500-3.500V4.300z" /><circle cx="8" cy="8" r="2.500" /></Svg>
            </ChartButton>
          </ChartButtons>
          <StylePanel />
        </SheetView>
        <ScrollStrip>
          <Svg w={8} h={2} stroke="#999"><path d="M0 1h8" /></Svg>
          <Triangle w={6} h={5} d="M0 5h6L3 0z" />
          <ScrollThumb />
          <Triangle w={6} h={5} d="M0 0h6L3 5z" />
        </ScrollStrip>
      </SheetArea>
      <Bottom />
      <Arrows width="270" height="290" viewBox="0 0 270 290" aria-hidden="true">
        <path d="M13 281 100 230M261 18l-22 41" stroke="#f00" strokeWidth="2.500" strokeLinecap="round" />
        <path d="m118 220-26 8 6 3 4 6zM232 72l8-26 3 5 7 1z" fill="#f00" stroke="#a00000" strokeWidth=".5" />
      </Arrows>
    </Page>
  );
}

export default App;
